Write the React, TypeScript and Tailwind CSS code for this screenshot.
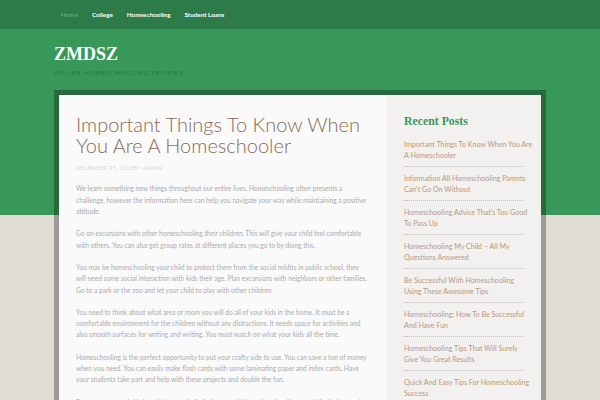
import React from 'react';

const nav = ['Home', 'College', 'Homeschooling', 'Student Loans'];

const recent = [
  'Important Things To Know When You Are A Homeschooler',
  'Information All Homeschooling Parents Can\u2019t Go On Without',
  'Homeschooling Advice That\u2019s Too Good To Pass Up',
  'Homeschooling My Child \u2013 All My Questions Answered',
  'Be Successful With Homeschooling Using These Awesome Tips',
  'Homeschooling: How To Be Successful And Have Fun',
  'Homeschooling Tips That Will Surely Give You Great Results',
  'Quick And Easy Tips For Homeschooling Success',
];

const paras = [
  'We learn something new things throughout our entire lives. Homeschooling often presents a challenge, however the information here can help you navigate your way while maintaining a positive attitude.',
  'Go on excursions with other homeschooling their children. This will give your child feel comfortable with others. You can also get group rates at different places you go to by doing this.',
  'You may be homeschooling your child to protect them from the social misfits in public school, they will need some social interaction with kids their age. Plan excursions with neighbors or other families. Go to a park or the zoo and let your child to play with other children.',
  'You need to think about what area or room you will do all of your kids in the home. It must be a comfortable environment for the children without any distractions. It needs space for activities and also smooth surfaces for writing and writing. You must watch on what your kids all the time.',
  'Homeschooling is the perfect opportunity to put your crafty side to use. You can save a ton of money when you need. You can easily make flash cards with some laminating paper and index cards. Have your students take part and help with these projects and double the fun.',
  'Be sure to research biology, history and all of what your kids are learning. You would find what works best.',
];

export default function App() {
  return (
    <div className="h-[400px] w-[600px] overflow-hidden bg-[linear-gradient(to_bottom,#37985a_0,#37985a_215px,#e0ddd4_215px)] font-['Lato','Liberation_Sans',sans-serif]">
      {/* Nav */}
      <div className="flex h-[29px] items-center gap-[14px] bg-[#2d7b49] pl-[61px] text-[6.3px] font-bold">
        {nav.map((n, i) => (
          <span key={n} className={i === 0 ? 'text-[#5ea676]' : 'text-white'}>{n}</span>
        ))}
      </div>

      {/* Branding */}
      <div className="px-[54px] pt-[15px]">
        <div className="font-['Liberation_Serif',serif] text-[18px] font-bold leading-[20px] text-white">ZMDSZ</div>
        <div className="mt-[5px] text-[5.5px] uppercase tracking-[1.2px] text-[#257241]">Online Homeschooling Reviews</div>
      </div>

      {/* Container */}
      <div className="mx-[54px] mt-[13px] flex border-[5px] border-b-0 border-black/30">
        <main className="w-[327px] bg-[#fafafa] px-[17px] pt-[19px]">
          <h1 className="text-[20px] font-light leading-[21px] text-[#8b6b57]">
            Important Things To Know When You Are A Homeschooler
          </h1>
          <div className="mt-[9px] text-[4.8px] uppercase tracking-[0.7px] text-[#d2d2d2]">December 25, 2015by admin</div>
          <div className="mt-[11px] flex flex-col gap-[11px] text-[6.6px] leading-[11.3px] text-[#ababab]">
            {paras.map((p, i) => (
              <p key={i}>{p}</p>
            ))}
          </div>
        </main>
        <aside className="flex-1 bg-[#f3f1ef] pl-[18px] pr-[17px] pt-[19px]">
          <h2 className="font-['Liberation_Serif',serif] text-[11.8px] font-bold leading-[14px] text-[#3a985c]">Recent Posts</h2>
          <ul className="mt-[5px]">
            {recent.map(r => (
              <li key={r} className="border-b border-dotted border-[#c9b9ad] py-[5.5px] text-[7.1px] leading-[11px] text-[#b9987f]">
                <span className="-mr-[9px] block">{r}</span>
              </li>
            ))}
          </ul>
        </aside>
      </div>
    </div>
  );
}
